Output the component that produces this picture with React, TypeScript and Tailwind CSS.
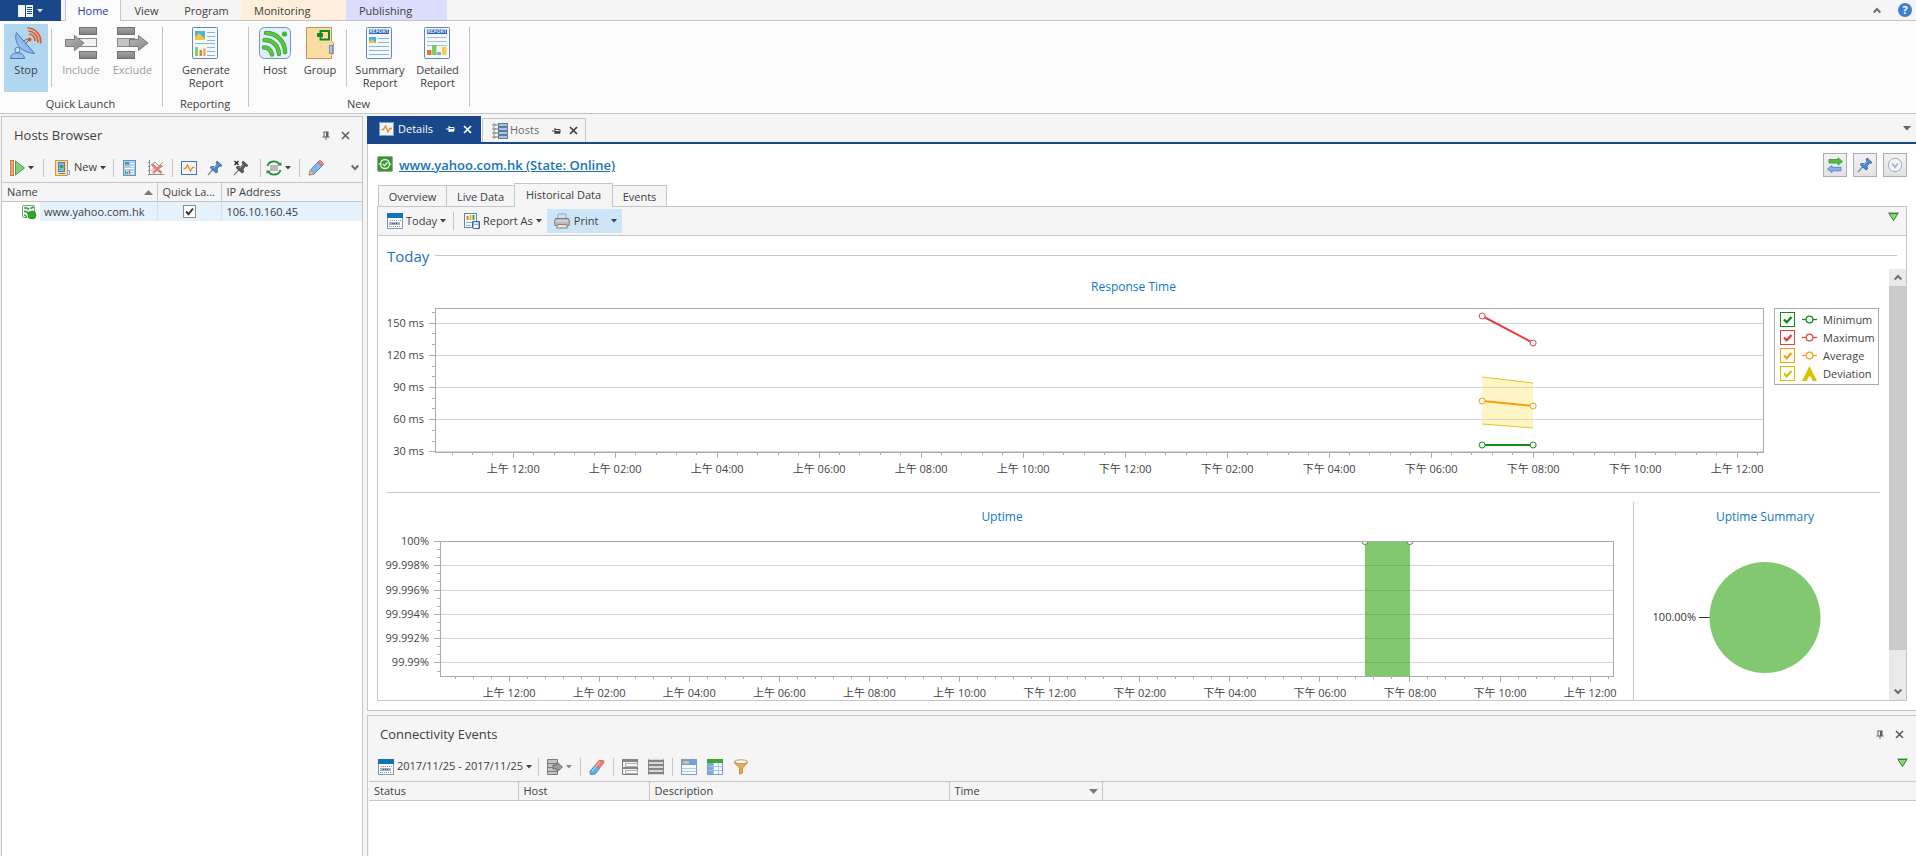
import { useState } from "react";
import type { ReactNode } from "react";

const FONT = "font-['Open_Sans','Noto_Sans_CJK_TC',sans-serif]";

/* ---------- small glyphs ---------- */

function Caret({ className = "text-[#404040]" }: { className?: string }) {
  return (
    <svg width="6" height="4" viewBox="0 0 6 4" className={className} aria-hidden="true">
      <path d="M0 0h6L3 3.5z" fill="currentColor" />
    </svg>
  );
}

function PinDown() {
  return (
    <svg width="8" height="9" viewBox="0 0 8 9" aria-hidden="true">
      <path d="M1.500 1h5M2 1v5M0.500 6h7M4 6v3" stroke="#606060" fill="none" />
      <path d="M4 1h2.500v5H4z" fill="#606060" />
    </svg>
  );
}

function PinSide({ color }: { color: string }) {
  return (
    <svg width="9" height="8" viewBox="0 0 9 8" aria-hidden="true">
      <path d="M0 4h3M3 1v6M3 2.500h5v3.500H3" stroke={color} fill="none" />
      <path d="M3 4h5v2.500H3z" fill={color} />
    </svg>
  );
}

function Cross({ color = "#606060" }: { color?: string }) {
  return (
    <svg width="9" height="9" viewBox="0 0 9 9" aria-hidden="true">
      <path d="M1 1l7 7M8 1L1 8" stroke={color} strokeWidth="1.700" fill="none" />
    </svg>
  );
}

function Chevron({ up = false }: { up?: boolean }) {
  return (
    <svg width="8" height="7" viewBox="0 0 8 7" aria-hidden="true">
      <path d={up ? "M0.700 5.500L4 2l3.300 3.500" : "M0.700 1.500L4 5l3.300-3.500"} stroke="#6e6e6e" strokeWidth="2" fill="none" />
    </svg>
  );
}

function GreenTriangle() {
  return (
    <svg width="11" height="10" viewBox="0 0 11 10" aria-hidden="true">
      <path d="M0 0.500h11" stroke="#b4bdb4" />
      <path d="M1 1.500h9L5.500 8.500z" fill="#7fdc6c" stroke="#3c7a3c" />
    </svg>
  );
}

/* ---------- 32px ribbon icons ---------- */

function StopIcon() {
  return (
    <svg width="32" height="32" viewBox="0 0 32 32" aria-hidden="true">
      <defs>
        <linearGradient id="dish" x1="0" y1="1" x2="1" y2="0">
          <stop offset="0" stopColor="#b9d6f7" />
          <stop offset="1" stopColor="#5b8fd6" />
        </linearGradient>
      </defs>
      <path d="M6.500 5.500C4 12 7 25 24.500 26.500z" fill="url(#dish)" stroke="#4a78b8" />
      <path d="M13 14l6-2.500M15.500 17l4-5" fill="none" stroke="#5f6f86" strokeWidth="0.900" />
      <circle cx="7.500" cy="23" r="2.600" fill="#cfe2fa" stroke="#4a78b8" />
      <path d="M0.500 31.500c1-5 3-5.500 7-5.500s6 1 7 5.500z" fill="#9cc0ec" stroke="#4a78b8" />
      <circle cx="19.500" cy="12.500" r="2" fill="#f0500f" />
      <path d="M19 7a6.500 6.500 0 0 1 6 7M18.500 4a10 10 0 0 1 9.200 11.500M17.500 1a13.500 13.500 0 0 1 13 15.500" fill="none" stroke="#e8561a" strokeWidth="1.700" />
    </svg>
  );
}

function IncludeIcon({ out = false }: { out?: boolean }) {
  return (
    <svg width="32" height="32" viewBox="0 0 32 32" aria-hidden="true">
      <defs>
        <linearGradient id="bar" x1="0" y1="0" x2="0" y2="1">
          <stop offset="0" stopColor="#a6a6a6" />
          <stop offset="1" stopColor="#7f7f7f" />
        </linearGradient>
        <linearGradient id="arrow" x1="0" y1="0" x2="1" y2="1">
          <stop offset="0" stopColor="#b5b5b5" />
          <stop offset="1" stopColor="#8b8b8b" />
        </linearGradient>
      </defs>
      <g stroke="#6f6f6f" fill="url(#bar)">
        <rect x={out ? 0.5 : 14.5} y="0.500" width="17" height="7" />
        <rect x={out ? 0.5 : 14.5} y="24.500" width="17" height="7" />
      </g>
      <rect x={out ? 0.5 : 14.5} y="11.500" width="17" height="8" fill={out ? "#c4c4c4" : "#f2f2f2"} stroke="#8a8a8a" />
      <path
        d={out ? "M12.500 12.500h9v-4l9.500 7.500l-9.500 7.500v-4h-9z" : "M0.500 12.500h9v-4l9.500 7.500l-9.500 7.500v-4h-9z"}
        fill="url(#arrow)"
        stroke="#7b7b7b"
      />
    </svg>
  );
}

function Sheet({ children }: { children: ReactNode }) {
  return (
    <svg width="32" height="32" viewBox="1 0 32 32" aria-hidden="true">
      <rect x="3.500" y="0.500" width="25" height="31" rx="1" fill="#f3f8fd" stroke="#6b87aa" />
      {children}
    </svg>
  );
}

function GenerateIcon() {
  return (
    <Sheet>
      <rect x="6" y="4" width="10" height="9" fill="#45b3e8" />
      <path d="M6 13V10l4-4 6 6v1z" fill="#f5c92b" />
      <path d="M18 5.500h8M18 9.500h8M18 13.500h8M6 16.500h20M18 20.500h8M18 24.500h8M18 28.500h8" stroke="#93b3cf" />
      <path d="M6 20h3v9H6z" fill="#7ccf6a" />
      <path d="M10.500 23h2.500v6h-2.500z" fill="#f07e2c" />
      <path d="M14.500 21.500h2v7.500h-2z" fill="#e4a22c" />
    </Sheet>
  );
}

function ReportBand() {
  return (
    <>
      <path d="M6 2h20v5H6z" fill="#2a63b4" />
      <text x="16" y="6.300" textAnchor="middle" fontSize="5" fontWeight="700" fill="#e6f0fb">REPORT</text>
    </>
  );
}

function SummaryIcon() {
  return (
    <Sheet>
      <ReportBand />
      <rect x="6" y="10" width="7" height="6" fill="#45b3e8" />
      <path d="M6 16v-1l3-3 4 4z" fill="#f5c92b" />
      <path d="M15 11.500h11M15 15.500h11M6 19.500h20M6 23.500h20M6 27.500h20" stroke="#93b3cf" />
    </Sheet>
  );
}

function DetailedIcon() {
  return (
    <Sheet>
      <ReportBand />
      <path d="M6 10.500h20M6 14.500h20M6 18.500h20" stroke="#a9bfd4" />
      <path d="M6 23h4.500v5H6z" fill="#ee7630" />
      <path d="M11 18h4.500v10H11z" fill="#79cb64" />
      <path d="M16 25h4v3h-4z" fill="#7fa7e0" />
      <path d="M21 20h4.500v8H21z" fill="#f3cb4b" />
    </Sheet>
  );
}

function HostIcon() {
  return (
    <svg width="32" height="32" viewBox="0 0 32 32" aria-hidden="true">
      <rect x="0.500" y="0.500" width="31" height="31" rx="5" fill="#e1eefb" stroke="#7795bd" />
      <circle cx="25.500" cy="7" r="2.600" fill="#43b832" />
      <path d="M7 6c10 0 19 8 19 19M5.500 13c8 0 14 5.500 14.500 14M5 20.500c4.500 0 7 2.500 8 7" fill="none" stroke="#3f9f2e" strokeWidth="4.400" strokeLinecap="round" />
      <path d="M7 6c10 0 19 8 19 19M5.500 13c8 0 14 5.500 14.500 14M5 20.500c4.500 0 7 2.500 8 7" fill="none" stroke="#56c93e" strokeWidth="2.800" strokeLinecap="round" />
    </svg>
  );
}

function GroupIcon() {
  return (
    <svg width="32" height="32" viewBox="0 0 32 32" aria-hidden="true">
      <path d="M2.500 0.500h25v13l2 3v10l-2 2v3h-25z" fill="#fadca3" stroke="#c4935a" />
      <rect x="25.500" y="18.500" width="3" height="8" fill="#a9c8ee" stroke="#6f93c5" />
      <path d="M16.500 6V4H25v8.500h-8.500V10" fill="none" stroke="#118a2e" strokeWidth="2" />
      <rect x="13" y="6" width="6" height="4" fill="#118a2e" />
    </svg>
  );
}

/* ---------- 16px toolbar icons ---------- */

function Svg16({ children }: { children: ReactNode }) {
  return (
    <svg width="16" height="16" viewBox="0 0 16 16" className="shrink-0" aria-hidden="true">
      {children}
    </svg>
  );
}

const PlayIcon = () => (
  <Svg16>
    <rect x="1.500" y="0.500" width="3" height="15" fill="#eda274" stroke="#c98258" />
    <path d="M6.500 1l9 7-9 7z" fill="#7ecf7a" stroke="#4f9e50" />
  </Svg16>
);

const NewHostIcon = () => (
  <Svg16>
    <path d="M0.500 0.500h12v9l2 2v3h-2v1h-12z" fill="#fbdc9c" stroke="#c49650" />
    <rect x="3.500" y="2.500" width="6" height="9" fill="#7db7e8" stroke="#5a80a8" />
    <path d="M4 13.500h6" stroke="#5a80a8" />
    <circle cx="6.500" cy="6.500" r="1.800" fill="#3fa535" />
    <rect x="12.500" y="10.500" width="2" height="4" fill="#dcebfa" stroke="#8aa6cc" />
  </Svg16>
);

const ReportSmallIcon = () => (
  <Svg16>
    <rect x="1.500" y="0.500" width="12" height="15" fill="#a9d0f2" stroke="#6d90b4" />
    <rect x="3" y="2" width="4" height="3" fill="#2f9ad4" />
    <path d="M3 6V5l2-1 2 2z" fill="#f0c42a" />
    <path d="M9 3.500h3M9 6.500h3M3 8.500h9M9 11.500h3M9 13.500h3" stroke="#fff" />
    <path d="M3.500 14v-3M5.500 14v-2" stroke="#3fa535" />
    <path d="M7.500 14v-4" stroke="#e2692c" />
  </Svg16>
);

const ChartRemoveIcon = () => (
  <Svg16>
    <path d="M1.500 0v15M0 14.500h16M0 10.500h2M0 6.500h2M0 2.500h2" fill="none" stroke="#8a8a8a" />
    <path d="M3 5l4-3 4 4 4-4M3 11l4-4 4 1 4-2" fill="none" stroke="#7ea694" />
    <path d="M4 4.500l9.500 8.500M13.500 5L5 13" stroke="#e87f76" strokeWidth="2.600" />
  </Svg16>
);

const WaveIcon = () => (
  <Svg16>
    <rect x="0.500" y="1.500" width="15" height="13" fill="#eef4fb" stroke="#4f74ae" />
    <path d="M2.500 8.500h2l2-3.500 3 6 2-3.500h2" fill="none" stroke="#f08a24" strokeWidth="1.300" />
  </Svg16>
);

function PushPin({ body, edge, mark = false }: { body: string; edge: string; mark?: boolean }) {
  return (
    <Svg16>
      <path d="M1 15l5-5.500" stroke="#7a8796" strokeWidth="1.200" />
      <path d="M10 1l5 4.500-1.500 1-1-.5-2.500 3 .5 3-1.500 1L3 7.500l1.500-1 3 .2 2.500-2.700-.8-1.200z" fill={body} stroke={edge} strokeWidth="0.800" />
      <path d="M6.500 8l3.500-3.500" stroke="#cfe0f6" strokeWidth="0.800" />
      {mark && <path d="M1.500 1l4 4M5.500 1l-4 4" stroke="#222" strokeWidth="1.400" />}
    </Svg16>
  );
}

const SyncIcon = () => (
  <Svg16>
    <path d="M1.500 6C3 0.500 11 0 13.500 4.500M14.500 10C13 15.500 5 16 2.500 11.500" fill="none" stroke="#2f8a4a" strokeWidth="1.800" />
    <path d="M11.500 5.500h4V2zM4.500 10.500h-4V14z" fill="#2f8a4a" />
    <rect x="4" y="5" width="8" height="6" fill="#b9b9b9" />
  </Svg16>
);

const PencilIcon = () => (
  <Svg16>
    <path d="M1 15l1.500-5L10 2l4 4-8 8z" fill="#86b5ec" stroke="#5280bc" />
    <path d="M10 2l1.500-1.300c1-.7 4.500 2.500 3.700 3.800L14 6z" fill="#f08c80" stroke="#c0605a" />
    <path d="M1 15l1.500-5 3.500 4z" fill="#e8c58e" stroke="#a8834e" strokeWidth="0.700" />
  </Svg16>
);

const HostSmallIcon = () => (
  <Svg16>
    <rect x="1.500" y="1.500" width="12" height="12" rx="1.500" fill="#eef7ee" stroke="#76a57a" />
    <path d="M3 4h3l2 1.500M9.500 4.500L12.500 3M3 7.500c3-.5 4 1 4.500 2.500M3 11c1.500 0 2 .5 2.500 2" fill="none" stroke="#2f9e3a" strokeWidth="1.600" />
    <circle cx="11" cy="11" r="4" fill="#2fa52b" stroke="#1f7f20" strokeWidth="0.600" />
  </Svg16>
);

const HostsTabIcon = () => (
  <Svg16>
    {[1, 5, 9, 13].map((y) => (
      <g key={y}>
        <rect x="6.500" y={y - 0.5} width="9" height="3" fill="#9cc6ec" stroke="#5b708a" strokeWidth="0.900" />
        <circle cx="2" cy={y + 1} r="1.200" fill="#fff" stroke="#666" strokeWidth="0.800" />
        <path d={`M3 ${y + 1}h3`} stroke="#777" />
      </g>
    ))}
  </Svg16>
);

const StateIcon = () => (
  <Svg16>
    <rect x="0.500" y="0.500" width="15" height="15" rx="1" fill="#3d9433" stroke="#8fae8b" />
    <path d="M1.500 8h3M11.500 8h3" stroke="#dff3da" />
    <circle cx="8" cy="8" r="4.500" fill="none" stroke="#e6f6e2" strokeWidth="1.300" />
    <path d="M5.800 8l1.700 1.700L10.500 6.300" fill="none" stroke="#e6f6e2" strokeWidth="1.300" />
  </Svg16>
);

const CalendarIcon = () => (
  <Svg16>
    <rect x="0.500" y="0.500" width="15" height="15" fill="#fff" stroke="#7b9cc0" />
    <rect x="0" y="0" width="16" height="5" fill="#1272ba" />
    <path d="M3 7.500h11M2 13.500h11" stroke="#9a8690" strokeDasharray="1 1" />
    <rect x="2" y="9" width="11" height="3" fill="#9fb0c2" />
    <path d="M5 10.500h6" stroke="#3f5166" strokeDasharray="1 1" />
  </Svg16>
);

const ReportAsIcon = () => (
  <Svg16>
    <rect x="0.500" y="0.500" width="12" height="14" fill="#f6fafe" stroke="#5f84ad" />
    <path d="M3.500 7V3" stroke="#e2762c" strokeWidth="2" />
    <path d="M6.500 7V2" stroke="#e8b52d" strokeWidth="2" />
    <path d="M9.500 7V2" stroke="#3fa547" strokeWidth="2" />
    <path d="M2 9.500h6M2 12.500h5" stroke="#8fa9c4" />
    <path d="M8.500 8.500h7v7h-6l-1-1z" fill="#8fb4e4" stroke="#3f6299" />
    <rect x="10" y="12" width="4" height="3" fill="#fff" />
    <rect x="10" y="9" width="4" height="2" fill="#dbe8f8" />
  </Svg16>
);

const PrintIcon = () => (
  <Svg16>
    <path d="M4 6V1.500C4 .8 12 .8 12 1.500V6z" fill="#cfe2f8" stroke="#8ba3c0" />
    <path d="M1.500 5.500h13c1 2 1 5 .5 7H1c-.500-2-.500-5 .5-7z" fill="#bcbcbc" stroke="#7c7c7c" />
    <path d="M2 8h12" stroke="#e4e4e4" />
    <path d="M3.500 11.500h9l1 3.500h-11z" fill="#e9e2dc" stroke="#8f8578" />
  </Svg16>
);

const ExportIcon = () => (
  <Svg16>
    <path d="M0.500 0.500h10v15h-10zM0 4.500h10M0 8.500h10M0 12.500h10" fill="#c2c2c2" stroke="#7d7d7d" />
    <path d="M6 6h4V3l5.500 5L10 13v-3H6z" fill="#9c9c9c" stroke="#6d6d6d" />
  </Svg16>
);

const EraserIcon = () => (
  <Svg16>
    <path d="M1 12.500L10 1.500h4.500l.5 2-9 11.500-4.500.3z" fill="#ee7a70" stroke="#c65a54" strokeWidth="0.700" />
    <path d="M1 12.500L6 6.500l4 4-4 4.500-4.500.3z" fill="#58b8e4" stroke="#3f8fb8" strokeWidth="0.700" />
    <path d="M3 12l8-9" stroke="#fff" strokeOpacity="0.600" />
  </Svg16>
);

const ExpandIcon = () => (
  <Svg16>
    <path d="M0 1.500h16" stroke="#858585" strokeWidth="3" />
    <path d="M0.500 3v12.500h15M0.500 9.500h3M15.500 0v16" fill="none" stroke="#7f7f7f" />
    <rect x="3.500" y="4.500" width="12" height="3" fill="#f7f7f7" stroke="#b0b0b0" />
    <path d="M0 9h16" stroke="#858585" strokeWidth="2" />
    <rect x="3.500" y="11.500" width="12" height="3" fill="#f7f7f7" stroke="#b0b0b0" />
  </Svg16>
);

const RowsIcon = () => (
  <Svg16>
    <path d="M0 2h16M0 6h16M0 10h16M0 14h16" stroke="#858585" strokeWidth="2.600" />
    <path d="M0.500 0.500v15M15.500 0.500v15" stroke="#858585" />
  </Svg16>
);

const SummaryPanelIcon = () => (
  <Svg16>
    <rect x="0.500" y="0.500" width="15" height="15" fill="#f5f9fd" stroke="#7f9ec4" />
    <rect x="1" y="1" width="14" height="5" fill="#6ea0dc" />
    <path d="M2 3.500h6" stroke="#f8d06c" strokeWidth="2" />
    <path d="M1 9.500h14M1 12.500h14" stroke="#b8cde6" />
  </Svg16>
);

const ColumnsIcon = () => (
  <Svg16>
    <rect x="0.500" y="0.500" width="15" height="15" fill="#f5f9fd" stroke="#7f9ec4" />
    <rect x="0" y="0" width="16" height="4" fill="#3fa535" />
    <rect x="1" y="4" width="5" height="11" fill="#7fa6e4" />
    <path d="M1 7.500h14M1 11.500h14M6.500 4v11M11.500 4v11" stroke="#a9c2e2" />
  </Svg16>
);

const FunnelIcon = () => (
  <Svg16>
    <path d="M1.500 3C2 6 6 7 6.500 9v6l3-1V9c.5-2 4.500-3 5-6z" fill="#e8ad4a" stroke="#a87c34" strokeWidth="0.800" />
    <ellipse cx="8" cy="2.700" rx="6.500" ry="1.900" fill="#fff4e0" stroke="#a08a6c" strokeWidth="0.800" />
  </Svg16>
);

const SwapIcon = () => (
  <Svg16>
    <path d="M2 2.500h9V.8L15.500 4.500 11 8V6H2z" fill="#52c03e" stroke="#38902c" strokeWidth="0.800" />
    <path d="M14 10.300H5V8.500L.5 12 5 15.500v-1.700h9z" fill="#7fb0ea" stroke="#4f7fbc" strokeWidth="0.800" />
  </Svg16>
);

const CircleDownIcon = () => (
  <Svg16>
    <circle cx="8" cy="8" r="6.700" fill="#f3f5fa" stroke="#9aa9c6" />
    <path d="M5 6.500l3 3.500 3-3.500" fill="none" stroke="#9aa9c6" strokeWidth="1.600" />
  </Svg16>
);

/* ---------- ribbon ---------- */

function RibbonButton({ label, icon, className = "" }: { label: string; icon: ReactNode; className?: string }) {
  return (
    <button type="button" className={`flex flex-col items-center pt-[3px] text-center leading-[13px] ${className}`}>
      {icon}
      <span className="mt-1 whitespace-pre-line">{label}</span>
    </button>
  );
}

function RibbonGroup({ title, className = "", children }: { title: string; className?: string; children: ReactNode }) {
  return (
    <section className={`relative flex flex-col pt-[3px] ${className}`}>
      <div className="flex h-[68px]">{children}</div>
      <h2 className="mt-[4px] pr-[2px] text-center leading-4">{title}</h2>
      <span className="absolute right-0 top-[6px] h-20 w-px bg-[#c6c6c6]" />
    </section>
  );
}

function Ribbon() {
  return (
    <header>
      <nav className="flex h-[21px] border-b border-[#c6c6c6] bg-[#f5f5f5] leading-[21px]">
        <button type="button" aria-label="Application menu" className="flex h-[21px] w-[61px] items-center justify-center gap-1 bg-[#19478a]">
          <svg width="15" height="12" viewBox="0 0 15 12" aria-hidden="true">
            <path d="M0 0h7v12H0zM8 0h7v12H8z" fill="#f2f6fb" />
            <path d="M9 2.500h5M9 4.500h5M9 6.500h5M9 8.500h5" stroke="#19478a" />
          </svg>
          <Caret className="text-[#cfe4f6]" />
        </button>
        <a href="#home" className="ml-1 h-[21px] w-[56px] border-x border-[#c6c6c6] bg-[#fbfbfb] text-center text-[#1b3f94]">Home</a>
        <a href="#view" className="w-[51px] text-center">View</a>
        <a href="#program" className="w-[69px] text-center">Program</a>
        <a href="#monitoring" className="h-[20px] w-[105px] bg-[#fdefdb] pl-[13px]">Monitoring</a>
        <a href="#publishing" className="h-[20px] w-[101px] bg-[#dcdcfd] pl-[13px]">Publishing</a>
        <div className="ml-auto flex items-center gap-[17px] pr-1">
          <button type="button" aria-label="Collapse ribbon"><Chevron up /></button>
          <button type="button" aria-label="Help" className="size-[14px] rounded-full bg-[#3f7fd0] text-center text-[11px] font-bold leading-[14px] text-white">?</button>
        </div>
      </nav>
      <div className="flex border-b border-[#c6c6c6] bg-[#fbfbfb] pb-px">
        <RibbonGroup title="Quick Launch" className="w-[163px]">
          <RibbonButton label="Stop" icon={<StopIcon />} className="ml-1 w-[44px] bg-[#b0d6f0]" />
          <span className="ml-[3px] mt-[5px] h-[58px] w-px bg-[#c6c6c6]" />
          <RibbonButton label="Include" icon={<IncludeIcon />} className="ml-1 w-[50px] text-[#9c9c9c]" />
          <RibbonButton label="Exclude" icon={<IncludeIcon out />} className="w-[53px] text-[#9c9c9c]" />
        </RibbonGroup>
        <RibbonGroup title="Reporting" className="w-[86px]">
          <RibbonButton label={"Generate\nReport"} icon={<GenerateIcon />} className="mx-auto" />
        </RibbonGroup>
        <RibbonGroup title="New" className="w-[221px]">
          <RibbonButton label="Host" icon={<HostIcon />} className="ml-[4px] w-[44px]" />
          <RibbonButton label="Group" icon={<GroupIcon />} className="w-[46px]" />
          <span className="ml-[3px] mt-[5px] h-[58px] w-px bg-[#c6c6c6]" />
          <RibbonButton label={"Summary\nReport"} icon={<SummaryIcon />} className="ml-[3px] w-[60px]" />
          <RibbonButton label={"Detailed\nReport"} icon={<DetailedIcon />} className="w-[55px]" />
        </RibbonGroup>
      </div>
    </header>
  );
}

/* ---------- shared pieces ---------- */

function Divider({ className = "" }: { className?: string }) {
  return <span className={`h-[18px] w-px shrink-0 bg-[#c6c6c6] ${className}`} />;
}

function Tool({ label, children }: { label: string; children: ReactNode }) {
  return (
    <button type="button" aria-label={label} className="flex shrink-0 items-center gap-[3px]">
      {children}
    </button>
  );
}

const TH = "border border-[#c6c6c6] pl-[5px] pr-1 text-left font-normal leading-[18px]";

/* ---------- hosts browser ---------- */

function HostsBrowser() {
  return (
    <aside className="ml-px flex w-[362px] shrink-0 flex-col border border-b-0 border-[#c6c6c6] bg-[#f5f5f5]">
      <div className="flex items-center pl-[12px] pr-3 pt-[8px]">
        <h2 className="text-[13px] leading-5">Hosts Browser</h2>
        <button type="button" aria-label="Pin panel" className="ml-auto"><PinDown /></button>
        <button type="button" aria-label="Close panel" className="ml-[11px]"><Cross /></button>
      </div>
      <div className="flex h-[37px] items-center pl-[7px] pr-[3px] pt-2">
        <Tool label="Start"><PlayIcon /><Caret /></Tool>
        <Divider className="ml-[9px] mr-[11px]" />
        <Tool label="New host"><NewHostIcon /><span>New</span><Caret /></Tool>
        <Divider className="ml-[7px] mr-[8px]" />
        <Tool label="Report"><ReportSmallIcon /></Tool>
        <span className="w-[10px]" />
        <Tool label="Clear chart"><ChartRemoveIcon /></Tool>
        <Divider className="mx-[8px]" />
        <Tool label="Details"><WaveIcon /></Tool>
        <span className="w-[10px]" />
        <Tool label="Pin"><PushPin body="#4f86d2" edge="#2f5fa8" /></Tool>
        <span className="w-[10px]" />
        <Tool label="Unpin"><PushPin body="#5c5c5c" edge="#3c3c3c" mark /></Tool>
        <Divider className="ml-[11px] mr-[5px]" />
        <Tool label="Refresh"><SyncIcon /><Caret /></Tool>
        <Divider className="mx-[8px]" />
        <Tool label="Edit"><PencilIcon /></Tool>
        <span className="ml-auto" />
        <Tool label="More"><Chevron /></Tool>
      </div>
      <div className="flex-1 bg-white">
        <table className="w-full table-fixed border-collapse">
          <thead>
            <tr className="bg-[#f5f5f5]">
              <th className={`${TH} w-[155px] border-l-0`}>
                <span className="flex items-center justify-between">
                  Name
                  <svg width="9" height="5" viewBox="0 0 9 5" aria-hidden="true"><path d="M0 5h9L4.500 0z" fill="#7a7a7a" /></svg>
                </span>
              </th>
              <th className={`${TH} w-[64px]`}>Quick La...</th>
              <th className={`${TH} border-r-0`}>IP Address</th>
            </tr>
          </thead>
          <tbody>
            <tr>
              <td className="border-r border-[#d6e3ee] p-0">
                <span className="flex items-center pl-[19px]">
                  <HostSmallIcon />
                  <span className="ml-[3px] flex-1 bg-[#e5f1fb] pl-[4px] leading-[19px]">www.yahoo.com.hk</span>
                </span>
              </td>
              <td className="border-r border-[#d6e3ee] bg-[#e5f1fb] p-0">
                <span className="relative mx-auto block size-[13px]">
                  <input type="checkbox" defaultChecked aria-label="Quick launch" className="peer block size-[13px] appearance-none border border-[#8c8c8c] bg-white" />
                  <svg viewBox="0 0 13 13" className="pointer-events-none absolute inset-0 hidden size-[13px] peer-checked:block" aria-hidden="true">
                    <path d="M3 6.500l2.500 2.700L10 3.500" fill="none" stroke="#3a3a3a" strokeWidth="2" />
                  </svg>
                </span>
              </td>
              <td className="bg-[#e5f1fb] p-0 pl-[5px] leading-[19px]">106.10.160.45</td>
            </tr>
          </tbody>
        </table>
      </div>
    </aside>
  );
}

/* ---------- charts ---------- */

const HOURS = [
  "上午 12:00", "上午 02:00", "上午 04:00", "上午 06:00", "上午 08:00", "上午 10:00", "下午 12:00",
  "下午 02:00", "下午 04:00", "下午 06:00", "下午 08:00", "下午 10:00", "上午 12:00",
];
const HOUR_ORIGIN = 5.89;
const HOUR_STEP = 7.68;
const SEVEN_PM = HOUR_ORIGIN + HOUR_STEP * 9.5;
const EIGHT_PM = HOUR_ORIGIN + HOUR_STEP * 10;
const MINOR_TICKS = Array.from({ length: 65 }, (_, i) => HOUR_ORIGIN + (HOUR_STEP / 5) * (i - 3)).filter((p) => p < 100);

interface AxisProps {
  height: number;
  rows: { label: string; y: number }[];
  minorRows: number[];
}

function Axes({ height, rows, minorRows }: AxisProps) {
  return (
    <g shapeRendering="crispEdges">
      {rows.map(({ label, y }) => (
        <g key={label}>
          <line x1="0" x2="100%" y1={y + 0.5} y2={y + 0.5} stroke="#d4d4d4" />
          <line x1="-6" x2="0" y1={y + 0.5} y2={y + 0.5} stroke="#ababab" />
          <text x="-11" y={y + 4} textAnchor="end" fill="#444" fontSize="11">{label}</text>
        </g>
      ))}
      {minorRows.map((y) => (
        <line key={y} x1="-3" x2="0" y1={y + 0.5} y2={y + 0.5} stroke="#ababab" />
      ))}
      {MINOR_TICKS.map((p) => (
        <line key={p} x1={`${p}%`} x2={`${p}%`} y1={height} y2={height + 3} stroke="#ababab" />
      ))}
      {HOURS.map((h, i) => {
        const p = `${HOUR_ORIGIN + HOUR_STEP * i}%`;
        return (
          <g key={i}>
            <line x1={p} x2={p} y1={height} y2={height + 6} stroke="#ababab" />
            <text x={p} y={height + 21} textAnchor="middle" fill="#444" fontSize="11">{h}</text>
          </g>
        );
      })}
      <rect x="0" y="0" width="100%" height={height} fill="none" stroke="#ababab" />
    </g>
  );
}

interface Series {
  name: string;
  color: string;
  values?: [number, number];
}

const SERIES: Series[] = [
  { name: "Minimum", color: "#0f8f17", values: [137, 137] },
  { name: "Maximum", color: "#e04343", values: [8, 35] },
  { name: "Average", color: "#ff9c0a", values: [93, 98] },
  { name: "Deviation", color: "#d8c200" },
];

const BAND = { top: [69, 75], bottom: [116, 120] };

function ResponseTime() {
  const [hidden, setHidden] = useState<string[]>([]);
  const toggle = (name: string) =>
    setHidden((h) => (h.includes(name) ? h.filter((n) => n !== name) : [...h, name]));
  const x1 = `${SEVEN_PM}%`;
  const x2 = `${EIGHT_PM}%`;
  return (
    <section className="border-b border-[#c6c6c6] pb-[9px] pt-[10px]">
      <h3 className="pb-[13px] text-center text-[12px] leading-4 text-[#1277c8]">Response Time</h3>
      <div className="flex items-start">
        <div className="min-w-0 flex-1 pl-[48px]">
          <svg className="block h-[175px] w-full overflow-visible" role="img" aria-label="Response time by hour">
            <Axes
              height={144}
              rows={[
                { label: "150 ms", y: 15 },
                { label: "120 ms", y: 47 },
                { label: "90 ms", y: 79 },
                { label: "60 ms", y: 111 },
                { label: "30 ms", y: 143 },
              ]}
              minorRows={[4, 25, 36, 58, 68, 90, 100, 122, 133]}
            />
            {!hidden.includes("Deviation") && (
              <g>
                <svg x={x1} y="0" width={`${HOUR_STEP / 2}%`} height="144" viewBox="0 0 100 144" preserveAspectRatio="none">
                  <path d={`M0 ${BAND.top[0]}L100 ${BAND.top[1]}V${BAND.bottom[1]}L0 ${BAND.bottom[0]}z`} fill="#fbe66a" fillOpacity="0.380" />
                </svg>
                <line x1={x1} x2={x2} y1={BAND.top[0]} y2={BAND.top[1]} stroke="#dcc81e" />
                <line x1={x1} x2={x2} y1={BAND.bottom[0]} y2={BAND.bottom[1]} stroke="#dcc81e" />
              </g>
            )}
            {SERIES.map(({ name, color, values }) =>
              values && !hidden.includes(name) ? (
                <g key={name} stroke={color}>
                  <line x1={x1} x2={x2} y1={values[0]} y2={values[1]} strokeWidth="2" />
                  <circle cx={x1} cy={values[0]} r="3" fill="#fff" />
                  <circle cx={x2} cy={values[1]} r="3" fill="#fff" />
                </g>
              ) : null,
            )}
          </svg>
        </div>
        <ul className="ml-[11px] mr-px flex w-[105px] flex-col gap-[3px] border border-[#ababab] bg-white py-[3px] pl-[5px]">
          {SERIES.map(({ name, color, values }) => (
            <li key={name}>
              <label className="flex items-center leading-[15px]" style={{ color }}>
                <span className="relative block size-[15px]">
                  <input
                    type="checkbox"
                    checked={!hidden.includes(name)}
                    onChange={() => toggle(name)}
                    className="peer block size-[15px] appearance-none border border-current bg-white"
                  />
                  <svg viewBox="0 0 15 15" className="pointer-events-none absolute inset-0 hidden size-[15px] peer-checked:block" aria-hidden="true">
                    <path d="M4 7.500l2.700 2.800L11.500 5" fill="none" stroke="currentColor" strokeWidth="2.400" />
                  </svg>
                </span>
                <svg width="15" height="15" viewBox="0 0 15 15" className="ml-[7px]" aria-hidden="true">
                  {values ? (
                    <>
                      <path d="M0 7.500h15" stroke="currentColor" strokeWidth="1.300" />
                      <circle cx="7.500" cy="7.500" r="3.400" fill="#fff" stroke="currentColor" strokeWidth="1.200" />
                    </>
                  ) : (
                    <path d="M0 15L7.500 0L15 15h-4.500L9 10.500H6.500L5 15z" fill="currentColor" />
                  )}
                </svg>
                <span className="ml-[6px] text-[#444]">{name}</span>
              </label>
            </li>
          ))}
        </ul>
      </div>
    </section>
  );
}

function Uptime() {
  return (
    <section className="min-w-0 flex-1 pr-5 pt-[7px]">
      <h3 className="pb-4 pl-1 text-center text-[12px] leading-4 text-[#1277c8]">Uptime</h3>
      <div className="pl-[53px]">
        <svg className="block h-[159px] w-full overflow-visible" role="img" aria-label="Uptime by hour">
          <Axes
            height={135}
            rows={[
              { label: "100%", y: 0 },
              { label: "99.998%", y: 24 },
              { label: "99.996%", y: 49 },
              { label: "99.994%", y: 73 },
              { label: "99.992%", y: 97 },
              { label: "99.99%", y: 121 },
            ]}
            minorRows={[8, 16, 32, 40, 57, 65, 81, 89, 105, 113, 130]}
          />
          <svg y="0" width="100%" height="135">
            <rect x={`${SEVEN_PM}%`} y="1" width={`${HOUR_STEP / 2}%`} height="134" fill="#2fa30f" fillOpacity="0.600" />
            <circle cx={`${SEVEN_PM}%`} cy="0.500" r="3" fill="#fff" stroke="#3a9c22" />
            <circle cx={`${EIGHT_PM}%`} cy="0.500" r="3" fill="#fff" stroke="#3a9c22" />
            <line x1="0" x2="100%" y1="0.500" y2="0.500" stroke="#ababab" />
          </svg>
        </svg>
      </div>
    </section>
  );
}

function UptimeSummary() {
  return (
    <section className="flex w-[247px] flex-col items-center border-l border-[#c6c6c6] pl-4 pt-[7px]">
      <h3 className="pb-4 text-[12px] leading-4 text-[#1277c8]">Uptime Summary</h3>
      <svg width="222" height="134" viewBox="0 0 222 134" role="img" aria-label="Uptime 100.00%">
        <text x="42" y="80" textAnchor="end" fill="#333" fontSize="11">100.00%</text>
        <path d="M45 76.500h12" stroke="#333" />
        <circle cx="111" cy="76.500" r="55.500" fill="#82c870" />
      </svg>
    </section>
  );
}

/* ---------- details ---------- */

function IconButton({ label, children }: { label: string; children: ReactNode }) {
  return (
    <button type="button" aria-label={label} className="flex size-6 items-center justify-center border border-[#adadad] bg-linear-to-b from-[#f2f2f2] to-[#e2e2e2]">
      {children}
    </button>
  );
}

const SUBTAB = "h-[21px] border border-b-0 border-[#c6c6c6] bg-[#f5f5f5] text-center leading-[21px]";

function Details() {
  return (
    <div className="flex flex-col">
      <div className="flex h-[28px] items-end border-b-2 border-[#19478a]">
        <div className="flex h-[26px] w-[114px] items-center bg-[#19478a] pl-3 text-white">
          <Svg16>
            <rect x="0.500" y="1.500" width="14" height="13" fill="#eef4fb" stroke="#7aa0d6" />
            <path d="M2.500 8.500h2l2-3.500 2.500 6 2-3.500h2" fill="none" stroke="#f08a24" strokeWidth="1.400" />
          </Svg16>
          <a href="#details" className="ml-[3px]">Details</a>
          <button type="button" aria-label="Pin Details" className="ml-auto"><PinSide color="#fff" /></button>
          <button type="button" aria-label="Close Details" className="ml-2 mr-[9px]"><Cross color="#fff" /></button>
        </div>
        <div className="ml-px flex h-[24px] w-[104px] items-center border border-b-0 border-[#c6c6c6] pl-[9px] text-[#6a6a6a]">
          <HostsTabIcon />
          <a href="#hosts" className="ml-[2px]">Hosts</a>
          <button type="button" aria-label="Pin Hosts" className="ml-auto"><PinSide color="#404040" /></button>
          <button type="button" aria-label="Close Hosts" className="ml-2 mr-[7px]"><Cross color="#404040" /></button>
        </div>
        <button type="button" aria-label="Tab list" className="mb-[11px] ml-auto mr-[5px]">
          <svg width="8" height="5" viewBox="0 0 8 5" aria-hidden="true"><path d="M0 0h8L4 4.500z" fill="#606060" /></svg>
        </button>
      </div>
      <div className="border-b border-l border-[#c6c6c6] bg-white px-[9px] py-[9px]">
        <div className="flex items-start">
          <span className="mt-[3px]"><StateIcon /></span>
          <a href="http://www.yahoo.com.hk" className="ml-[6px] mt-[2px] text-[13px] font-semibold leading-5 text-[#1a72b4] underline underline-offset-1">
            www.yahoo.com.hk (State: Online)
          </a>
          <div className="ml-auto flex gap-[6px]">
            <IconButton label="Switch host"><SwapIcon /></IconButton>
            <IconButton label="Pin host"><PushPin body="#4f86d2" edge="#2f5fa8" /></IconButton>
            <IconButton label="Expand"><CircleDownIcon /></IconButton>
          </div>
        </div>
        <nav className="mt-[6px] flex items-end pl-px">
          <a href="#overview" className={`${SUBTAB} w-[69px]`}>Overview</a>
          <a href="#live" className={`${SUBTAB} w-[67px] border-x-0`}>Live Data</a>
          <a href="#historical" className="relative -mb-px h-[24px] w-[99px] border border-b-0 border-[#c6c6c6] bg-[#f5f5f5] text-center leading-[22px]">Historical Data</a>
          <a href="#events" className={`${SUBTAB} w-[54px] border-l-0`}>Events</a>
        </nav>
        <div className="border border-[#c6c6c6]">
          <div className="flex h-[29px] items-center border-b border-[#c6c6c6] bg-[#f5f5f5] pl-[9px]">
            <Tool label="Date range"><CalendarIcon /><span>Today</span><Caret /></Tool>
            <Divider className="ml-[7px] mr-[10px]" />
            <Tool label="Report format"><ReportAsIcon /><span>Report As</span><Caret /></Tool>
            <button type="button" className="ml-[5px] flex h-6 w-[75px] items-center bg-[#cde6f7] pl-[7px]">
              <PrintIcon />
              <span className="ml-[4px]">Print</span>
              <span className="ml-auto mr-[5px]"><Caret /></span>
            </button>
            <button type="button" aria-label="Options" className="mb-2 ml-auto mr-[7px]"><GreenTriangle /></button>
          </div>
          <div className="flex items-center pb-[11px] pl-[9px] pr-[9px] pt-[10px]">
            <h2 className="text-[15px] leading-[20px] text-[#1a75bb]">Today</h2>
            <span className="-mt-[2px] ml-[6px] h-px flex-1 bg-[#c6c6c6]" />
          </div>
          <div className="-mt-[8px] flex">
            <div className="min-w-0 flex-1 pl-[9px] pr-[9px]">
              <ResponseTime />
              <div className="mt-[9px] flex">
                <Uptime />
                <UptimeSummary />
              </div>
            </div>
            <div className="flex w-[17px] flex-col bg-[#e9e9e9]">
              <button type="button" aria-label="Scroll up" className="flex h-[17px] items-center justify-center"><Chevron up /></button>
              <span className="flex-1 bg-[#cbcbcb]" />
              <button type="button" aria-label="Scroll down" className="flex h-[50px] items-end justify-center pb-[5px]"><Chevron /></button>
            </div>
          </div>
        </div>
      </div>
    </div>
  );
}

/* ---------- connectivity events ---------- */

function ConnectivityEvents() {
  return (
    <section className="mt-1 flex flex-1 flex-col border-l border-t border-[#c6c6c6] bg-[#f5f5f5] pl-px">
      <div className="flex items-center pl-[11px] pr-3 pt-[8px]">
        <h2 className="text-[13px] leading-5">Connectivity Events</h2>
        <button type="button" aria-label="Pin panel" className="ml-auto"><PinDown /></button>
        <button type="button" aria-label="Close panel" className="ml-[11px]"><Cross /></button>
      </div>
      <div className="flex h-[37px] items-center pl-[9px] pt-2">
        <Tool label="Date range"><CalendarIcon /><span>2017/11/25 - 2017/11/25</span><Caret /></Tool>
        <Divider className="ml-[6px] mr-[8px]" />
        <Tool label="Export"><ExportIcon /><Caret className="text-[#8c8c8c]" /></Tool>
        <Divider className="mx-[8px]" />
        <Tool label="Clear"><EraserIcon /></Tool>
        <Divider className="mx-[8px]" />
        <Tool label="Expand groups"><ExpandIcon /></Tool>
        <span className="w-[10px]" />
        <Tool label="Collapse groups"><RowsIcon /></Tool>
        <Divider className="mx-[8px]" />
        <Tool label="Group panel"><SummaryPanelIcon /></Tool>
        <span className="w-[10px]" />
        <Tool label="Columns"><ColumnsIcon /></Tool>
        <span className="w-[10px]" />
        <Tool label="Filter"><FunnelIcon /></Tool>
        <button type="button" aria-label="Options" className="mb-2 ml-auto mr-[8px]"><GreenTriangle /></button>
      </div>
      <div className="min-h-[75px] flex-1 bg-white">
        <table className="w-full table-fixed border-collapse bg-[#f5f5f5]">
          <thead>
            <tr>
              <th className={`${TH} w-[149px] border-l-0`}>Status</th>
              <th className={`${TH} w-[131px]`}>Host</th>
              <th className={`${TH} w-[300px]`}>Description</th>
              <th className={`${TH} w-[153px]`}>
                <span className="flex items-center justify-between">
                  Time
                  <svg width="9" height="5" viewBox="0 0 9 5" aria-hidden="true"><path d="M0 0h9L4.500 5z" fill="#7a7a7a" /></svg>
                </span>
              </th>
              <td className="border border-r-0 border-[#c6c6c6]" />
            </tr>
          </thead>
        </table>
      </div>
    </section>
  );
}

export default function App() {
  return (
    <div className={`flex min-h-screen flex-col bg-[#f5f5f5] text-[11px] text-[#404040] ${FONT}`}>
      <Ribbon />
      <div className="flex flex-1 pt-[2px]">
        <HostsBrowser />
        <main className="ml-1 flex min-w-0 flex-1 flex-col">
          <Details />
          <ConnectivityEvents />
        </main>
      </div>
    </div>
  );
}
